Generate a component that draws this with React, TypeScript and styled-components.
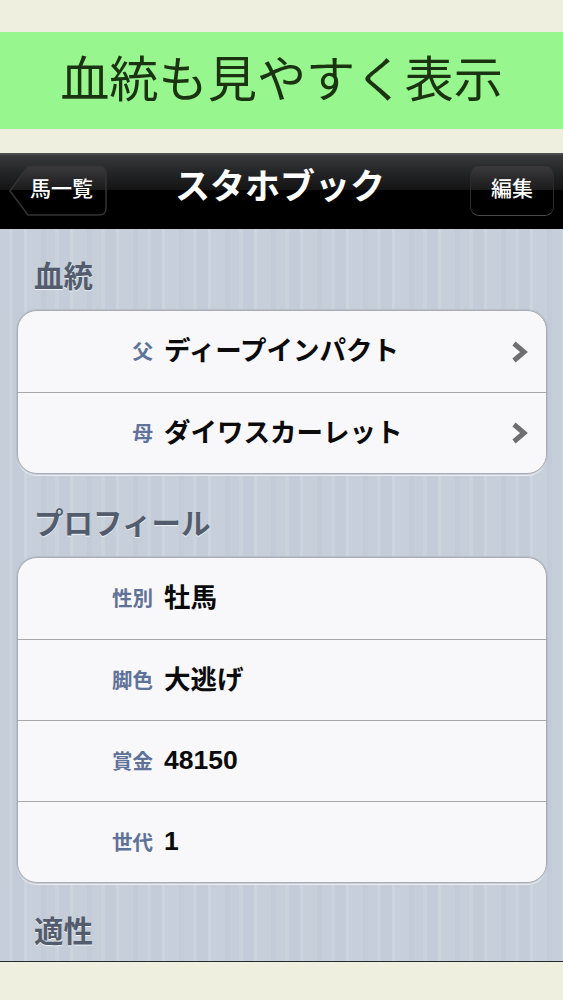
import React from 'react';
import styled, { createGlobalStyle } from 'styled-components';

const JP = `"Noto Sans CJK JP", "Liberation Sans", sans-serif`;

const GlobalStyle = createGlobalStyle`
  html, body {
    margin: 0;
    padding: 0;
    background: #efefdf;
  }
`;

const Page = styled.div`
  width: 563px;
  height: 1000px;
  overflow: hidden;
  background: #efefdf;
  padding-top: 32px;
  box-sizing: border-box;
  font-family: ${JP};
`;

const Banner = styled.div`
  height: 97px;
  background: #97f78e;
  color: #1c3312;
  font-size: 49.2px;
  line-height: 87px;
  text-align: center;
  white-space: nowrap;
  margin-bottom: 24px;
`;

const NavBar = styled.div`
  height: 76px;
  box-sizing: border-box;
  padding: 12px 9px 13px 9px;
  display: flex;
  align-items: stretch;
  justify-content: space-between;
  position: relative;
  background: linear-gradient(
    to bottom,
    #55565a 0,
    #37383a 3px,
    #232425 20px,
    #141415 37px,
    #000 37px,
    #000 100%
  );
`;

const NavTitle = styled.div`
  position: absolute;
  left: 0;
  right: 0;
  top: 5px;
  text-align: center;
  color: #fff;
  font-size: 35px;
  line-height: 52px;
  font-weight: 700;
  margin-left: -3px;
`;

const BackWrap = styled.div`
  position: relative;
  width: 98px;
  color: #fff;
  font-size: 21px;
  font-weight: 500;
  display: flex;
  align-items: center;
  justify-content: flex-end;
  padding: 0 14px 7px 0;
  box-sizing: border-box;
  line-height: 40px;
  span {
    position: relative;
  }
  svg {
    position: absolute;
    left: 0;
    top: 0;
  }
`;

const EditButton = styled.div`
  width: 84px;
  box-sizing: border-box;
  border: 1px solid #2c2c2e;
  border-bottom-color: #4a4a4c;
  border-radius: 9px;
  color: #fff;
  font-size: 21px;
  font-weight: 500;
  line-height: 42px;
  text-align: center;
  background: linear-gradient(to bottom, #3a3a3c 0, #1b1b1c 24px, #000 24px);
`;

const Body = styled.div`
  height: 733px;
  box-sizing: border-box;
  border-bottom: 1px solid #26282b;
  overflow: hidden;
  padding: 23px 16px 0 17px;
  background-color: #c6cfda;
  background-image: repeating-linear-gradient(
    to right,
    #c5ced9 0,
    #c5ced9 9px,
    #cad2dc 9px,
    #cad2dc 13px,
    #c3ccd8 13px,
    #c3ccd8 24px,
    #ccd4de 24px,
    #ccd4de 27px,
    #c6cfda 27px,
    #c6cfda 41px,
    #c2cbd7 41px,
    #c2cbd7 46px
  );
`;

const Heading = styled.div`
  color: #535c6c;
  font-size: 29.5px;
  font-weight: 700;
  line-height: 44px;
  height: 44px;
  padding-left: 17px;
  text-shadow: 0 1px 0 #eef2f6;
`;

const Group = styled.div<{ $gap: number; $top: number }>`
  background: #f8f8fa;
  border: 1px solid #a9aeb6;
  border-radius: 20px;
  margin-top: ${(p) => p.$top}px;
  margin-bottom: ${(p) => p.$gap}px;
  box-shadow: 0 0 0 1px rgba(170, 175, 185, 0.5), 0 2px 0 #e8edf2;
  overflow: hidden;
`;

const Row = styled.div`
  height: 81px;
  box-sizing: border-box;
  display: flex;
  align-items: center;
  position: relative;
  & + & {
    border-top: 1px solid #a5a8ad;
  }
`;

const Label = styled.div`
  width: 135px;
  margin-bottom: 3px;
  text-align: right;
  color: #5f7299;
  font-size: 20.5px;
  font-weight: 700;
  flex-shrink: 0;
`;

const Value = styled.div<{ $numeric?: boolean }>`
  margin: 0 0 ${(p) => (p.$numeric ? 2 : 6)}px 11px;
  flex: 1;
  color: #0b0b0b;
  font-family: "Liberation Sans", ${JP};
  font-size: 26.5px;
  font-weight: 700;
  white-space: nowrap;
`;

const Chevron = styled.svg`
  width: 18px;
  height: 24px;
  margin-right: 17px;
  flex-shrink: 0;
`;

function Disclosure() {
  return (
    <Chevron viewBox="0 0 18 24">
      <path d="M3 3.5 L13 12 L3 20.5" fill="none" stroke="#6f6f72" strokeWidth="5" strokeLinejoin="miter" />
    </Chevron>
  );
}

const sire = [
  { label: '父', value: 'ディープインパクト' },
  { label: '母', value: 'ダイワスカーレット' },
];

const profile = [
  { label: '性別', value: '牡馬' },
  { label: '脚色', value: '大逃げ' },
  { label: '賞金', value: '48150', numeric: true },
  { label: '世代', value: '1', numeric: true },
];

export default function App() {
  return (
    <Page>
      <GlobalStyle />
      <Banner>血統も見やすく表示</Banner>
      <NavBar>
        <BackWrap>
          <svg width="98" height="51" viewBox="0 0 98 51">
            <defs>
              <linearGradient id="backFill" x1="0" y1="0" x2="0" y2="1">
                <stop offset="0" stopColor="#3a3a3c" />
                <stop offset="0.49" stopColor="#1b1b1c" />
                <stop offset="0.49" stopColor="#000" />
                <stop offset="1" stopColor="#000" />
              </linearGradient>
            </defs>
            <path
              d="M1 26 L19 1 H90 Q97 1 97 8 V43 Q97 50 90 50 H19 Z"
              fill="url(#backFill)"
              stroke="#333335"
              strokeWidth="1.5"
            />
          </svg>
          <span>馬一覧</span>
        </BackWrap>
        <NavTitle>スタホブック</NavTitle>
        <EditButton>編集</EditButton>
      </NavBar>
      <Body>
        <Heading>血統</Heading>
        <Group $gap={25} $top={14}>
          {sire.map((r) => (
            <Row key={r.label}>
              <Label>{r.label}</Label>
              <Value>{r.value}</Value>
              <Disclosure />
            </Row>
          ))}
        </Group>
        <Heading>プロフィール</Heading>
        <Group $gap={24} $top={14}>
          {profile.map((r) => (
            <Row key={r.label}>
              <Label>{r.label}</Label>
              <Value $numeric={r.numeric}>{r.value}</Value>
            </Row>
          ))}
        </Group>
        <Heading>適性</Heading>
      </Body>
    </Page>
  );
}
